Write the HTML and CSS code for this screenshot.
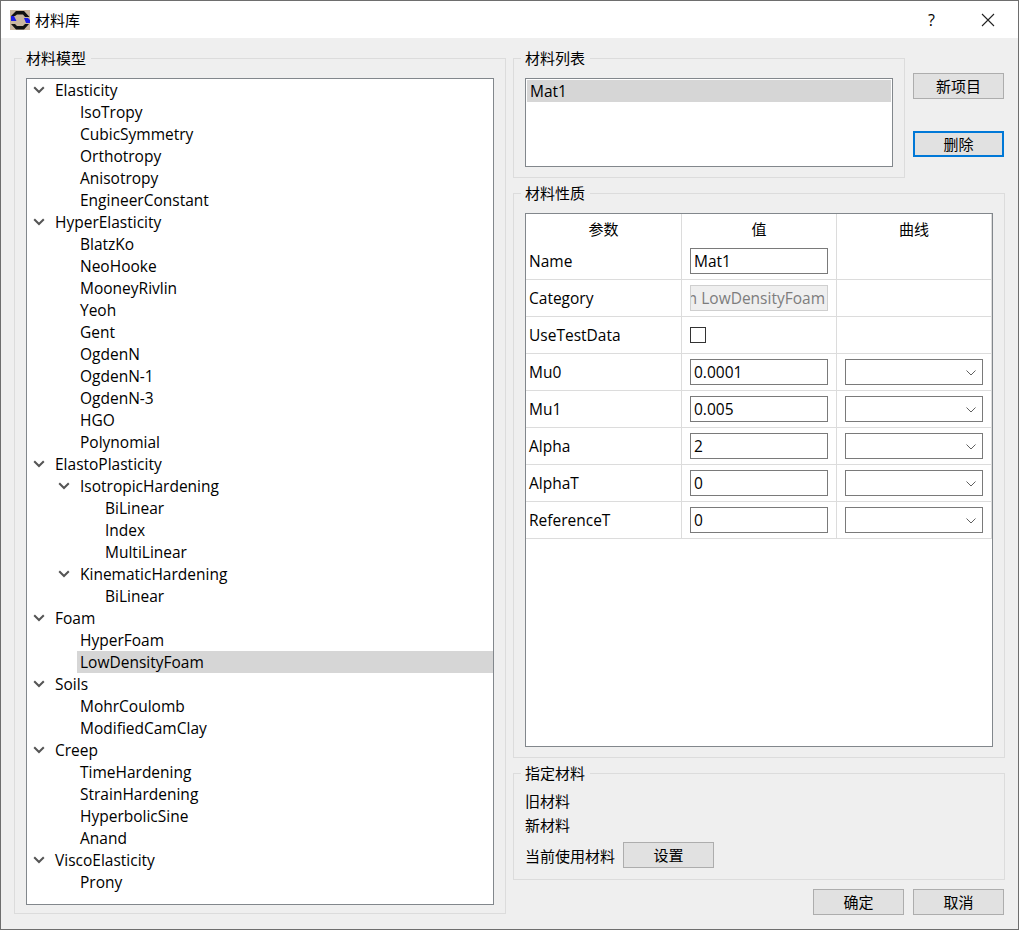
FILE: index.html
```html
<!DOCTYPE html>
<html lang="zh-CN">
<head>
    <meta charset="UTF-8">
    <title>材料库</title>
    <link rel="stylesheet" href="styles.css">
</head>
<body>
<svg width="0" height="0" class="defs">
    <symbol id="chev" viewBox="0 0 12 8"><path d="M1.2 1.2 L6 6 L10.8 1.2" fill="none" stroke="#555" stroke-width="2"/></symbol>
    <symbol id="combo" viewBox="0 0 10 6"><path d="M.5 .5 L5 5 L9.5 .5" fill="none" stroke="#606060" stroke-width="1"/></symbol>
</svg>
<div class="window">
    <div class="titlebar">
        <svg class="app-icon" width="20" height="20" viewBox="0 0 20 20">
            <rect width="20" height="20" fill="#c9b59f"/>
            <path d="M1 6 H5 L7 4.5 H13 L15 7 H19.5 L14 1 H6Z" fill="#111"/>
            <path d="M1 14 H5 L7 16 H13 L15 14 H19 L14 19.5 H6Z" fill="#111"/>
            <path d="M1 6 H4 L6.5 11 H1Z M14 8 H18 L20 10 V13 H16Z" fill="#1a1ae6"/>
        </svg>
        <span class="title-text">材料库</span>
        <span class="help">?</span>
        <svg class="close" width="14" height="14" viewBox="0 0 14 14"><path d="M1 1 L13 13 M13 1 L1 13" stroke="#222" stroke-width="1.1"/></svg>
    </div>
    <div class="content">
        <div class="main">
            <div class="group model-group">
                <div class="group-title">材料模型</div>
                <div class="tree">
                    <div class="node l0"><svg class="chev"><use href="#chev"/></svg>Elasticity</div>
                    <div class="node l1">IsoTropy</div>
                    <div class="node l1">CubicSymmetry</div>
                    <div class="node l1">Orthotropy</div>
                    <div class="node l1">Anisotropy</div>
                    <div class="node l1">EngineerConstant</div>
                    <div class="node l0"><svg class="chev"><use href="#chev"/></svg>HyperElasticity</div>
                    <div class="node l1">BlatzKo</div>
                    <div class="node l1">NeoHooke</div>
                    <div class="node l1">MooneyRivlin</div>
                    <div class="node l1">Yeoh</div>
                    <div class="node l1">Gent</div>
                    <div class="node l1">OgdenN</div>
                    <div class="node l1">OgdenN-1</div>
                    <div class="node l1">OgdenN-3</div>
                    <div class="node l1">HGO</div>
                    <div class="node l1">Polynomial</div>
                    <div class="node l0"><svg class="chev"><use href="#chev"/></svg>ElastoPlasticity</div>
                    <div class="node l1"><svg class="chev"><use href="#chev"/></svg>IsotropicHardening</div>
                    <div class="node l2">BiLinear</div>
                    <div class="node l2">Index</div>
                    <div class="node l2">MultiLinear</div>
                    <div class="node l1"><svg class="chev"><use href="#chev"/></svg>KinematicHardening</div>
                    <div class="node l2">BiLinear</div>
                    <div class="node l0"><svg class="chev"><use href="#chev"/></svg>Foam</div>
                    <div class="node l1">HyperFoam</div>
                    <div class="node l1 selected">LowDensityFoam</div>
                    <div class="node l0"><svg class="chev"><use href="#chev"/></svg>Soils</div>
                    <div class="node l1">MohrCoulomb</div>
                    <div class="node l1">ModifiedCamClay</div>
                    <div class="node l0"><svg class="chev"><use href="#chev"/></svg>Creep</div>
                    <div class="node l1">TimeHardening</div>
                    <div class="node l1">StrainHardening</div>
                    <div class="node l1">HyperbolicSine</div>
                    <div class="node l1">Anand</div>
                    <div class="node l0"><svg class="chev"><use href="#chev"/></svg>ViscoElasticity</div>
                    <div class="node l1">Prony</div>
                </div>
            </div>
            <div class="right">
                <div class="list-row">
                    <div class="group list-group">
                        <div class="group-title">材料列表</div>
                        <div class="list"><div class="list-item">Mat1</div></div>
                    </div>
                    <div class="list-buttons">
                        <button class="btn">新项目</button>
                        <button class="btn focused">删除</button>
                    </div>
                </div>
                <div class="group props-group">
                    <div class="group-title">材料性质</div>
                    <div class="table">
                        <div class="head">参数</div><div class="head">值</div><div class="head">曲线</div>
                        <div class="cell name-cell">Name</div><div class="cell val"><div class="input">Mat1</div></div><div class="cell"></div>
                        <div class="cell">Category</div><div class="cell val"><div class="input disabled"><span>Foam LowDensityFoam</span></div></div><div class="cell"></div>
                        <div class="cell">UseTestData</div><div class="cell val"><div class="check"></div></div><div class="cell"></div>
                        <div class="cell">Mu0</div><div class="cell val"><div class="input">0.0001</div></div><div class="cell val"><div class="select"><svg class="caret"><use href="#combo"/></svg></div></div>
                        <div class="cell">Mu1</div><div class="cell val"><div class="input">0.005</div></div><div class="cell val"><div class="select"><svg class="caret"><use href="#combo"/></svg></div></div>
                        <div class="cell">Alpha</div><div class="cell val"><div class="input">2</div></div><div class="cell val"><div class="select"><svg class="caret"><use href="#combo"/></svg></div></div>
                        <div class="cell">AlphaT</div><div class="cell val"><div class="input">0</div></div><div class="cell val"><div class="select"><svg class="caret"><use href="#combo"/></svg></div></div>
                        <div class="cell">ReferenceT</div><div class="cell val"><div class="input">0</div></div><div class="cell val"><div class="select"><svg class="caret"><use href="#combo"/></svg></div></div>
                    </div>
                </div>
                <div class="group assign-group">
                    <div class="group-title">指定材料</div>
                    <div class="assign-line">旧材料</div>
                    <div class="assign-line">新材料</div>
                    <div class="assign-row"><span>当前使用材料</span><button class="btn">设置</button></div>
                </div>
                <div class="footer">
                    <button class="btn">确定</button>
                    <button class="btn">取消</button>
                </div>
            </div>
        </div>
    </div>
</div>
</body>
</html>
```

FILE: styles.css
```css
* {
    box-sizing: border-box;
}

body {
    margin: 0;
    font-family: "Open Sans", "Noto Sans CJK SC", sans-serif;
    font-size: 15.5px;
    color: #000;
    background: #efefef;
}

.defs {
    position: absolute;
}

.window {
    width: 1019px;
    height: 930px;
    border: 1px solid #6e6e6e;
    background: #efefef;
    display: flex;
    flex-direction: column;
}

.titlebar {
    height: 37px;
    background: #fff;
    display: flex;
    align-items: center;
    padding-left: 9px;
    flex: none;
}

.title-text {
    margin-left: 5px;
    font-size: 15px;
}

.help {
    margin-left: auto;
    font-size: 16px;
    margin-right: 46px;
}

.close {
    margin-right: 23px;
}

.content {
    flex: 1;
    padding: 20px 13px 0;
}

.main {
    display: flex;
    gap: 7px;
}

.group {
    position: relative;
    border: 1px solid #dcdcdc;
}

.group-title {
    position: absolute;
    top: -11px;
    left: 7px;
    padding: 0 5px 0 4px;
    background: #efefef;
    font-size: 15px;
    line-height: 20px;
}

.model-group {
    width: 492px;
    height: 856px;
    padding: 19px 11px 0;
}

.tree {
    width: 468px;
    height: 827px;
    border: 1px solid #82878c;
    background: #fff;
}

.node {
    height: 22px;
    line-height: 22px;
    position: relative;
    white-space: nowrap;
}

.l0 {
    padding-left: 28px;
}

.l1 {
    padding-left: 53px;
}

.l2 {
    padding-left: 78px;
}

.chev {
    position: absolute;
    top: 7px;
    width: 12px;
    height: 8px;
}

.l0 .chev {
    left: 6px;
}

.l1 .chev {
    left: 31px;
}

.selected {
    background: linear-gradient(#d6d6d6, #d6d6d6) no-repeat 50px 0;
}

.right {
    width: 492px;
    display: flex;
    flex-direction: column;
}

.list-row {
    display: flex;
    gap: 8px;
}

.list-group {
    width: 392px;
    height: 120px;
    padding: 19px 11px 0;
}

.list {
    height: 89px;
    border: 1px solid #82878c;
    background: #fff;
    padding: 1px;
}

.list-item {
    height: 22px;
    line-height: 22px;
    background: #d6d6d6;
    padding-left: 3px;
}

.list-buttons {
    display: flex;
    flex-direction: column;
    gap: 32px;
    padding-top: 15px;
}

.btn {
    width: 91px;
    height: 26px;
    border: 1px solid #adadad;
    background: #e1e1e1;
    font-family: inherit;
    font-size: 15px;
    line-height: 22px;
    padding: 0 0 1px;
    color: #000;
}

.btn.focused {
    border: 2px solid #0078d7;
}

.props-group {
    margin-top: 15px;
    height: 565px;
    padding: 19px 11px 0;
}

.table {
    height: 534px;
    border: 1px solid #82878c;
    background: #fff;
    display: grid;
    grid-template-columns: 156px 155px 155px;
    grid-template-rows: 29px 37px repeat(7, 37px);
    align-content: start;
}

.head {
    text-align: center;
    font-size: 15px;
    line-height: 30px;
    border-right: 1px solid #dcdcdc;
}

.cell {
    display: flex;
    align-items: center;
    padding-left: 3px;
    border-right: 1px solid #dcdcdc;
    border-bottom: 1px solid #dcdcdc;
}

.cell.val {
    padding-left: 8px;
}

.input {
    width: 138px;
    height: 26px;
    border: 1px solid #7a7a7a;
    line-height: 24px;
    padding-left: 3px;
    overflow: hidden;
}

.input.disabled {
    border: 1px solid #cfcfcf;
    background: #efefef;
    color: #7d7d7d;
    display: flex;
    justify-content: flex-end;
    padding: 0 2px 0 0;
    white-space: nowrap;
}

.check {
    width: 16px;
    height: 16px;
    border: 1px solid #333;
}

.select {
    width: 138px;
    height: 26px;
    border: 1px solid #7a7a7a;
    position: relative;
}

.caret {
    position: absolute;
    right: 6px;
    top: 10px;
    width: 10px;
    height: 6px;
}

.assign-group {
    margin-top: 15px;
    height: 107px;
    padding: 15px 11px 0;
    font-size: 15px;
}

.assign-line {
    height: 24px;
    line-height: 24px;
}

.assign-row {
    margin-top: 5px;
    display: flex;
    align-items: center;
    gap: 8px;
}

.footer {
    margin-top: 9px;
    display: flex;
    justify-content: flex-end;
    gap: 9px;
    padding-right: 1px;
}
```
